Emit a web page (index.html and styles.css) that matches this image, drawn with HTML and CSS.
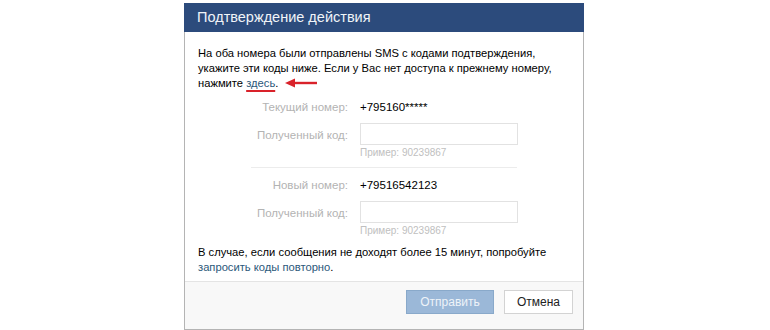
FILE: index.html
```html
<!DOCTYPE html>
<html lang="ru">
<head>
    <meta charset="UTF-8">
    <title>Подтверждение действия</title>
    <link rel="stylesheet" href="styles.css">
</head>
<body>
    <!-- Окно подтверждения -->
    <div class="dialog">
        <div class="dialog-title">Подтверждение действия</div>

        <div class="dialog-body">
            <p class="intro">
                На оба номера были отправлены SMS с кодами подтверждения,
                укажите эти коды ниже. Если у Вас нет доступа к прежнему номеру,
                нажмите <a href="#" class="link marked">здесь</a>.<svg class="arrow" width="33" height="10" viewBox="0 0 33 10"><path d="M33 5H8" stroke="#d9222a" stroke-width="2.4"/><path d="M1 5L11 0.5V9.5Z" fill="#d9222a"/></svg>
            </p>

            <div class="form-row">
                <span class="label">Текущий номер:</span>
                <span class="value">+795160*****</span>
            </div>
            <div class="form-row">
                <span class="label">Полученный код:</span>
                <div>
                    <input type="text" class="code-input">
                    <div class="hint">Пример: 90239867</div>
                </div>
            </div>

            <div class="separator"></div>

            <div class="form-row">
                <span class="label">Новый номер:</span>
                <span class="value">+79516542123</span>
            </div>
            <div class="form-row">
                <span class="label">Полученный код:</span>
                <div>
                    <input type="text" class="code-input">
                    <div class="hint">Пример: 90239867</div>
                </div>
            </div>

            <p class="outro">
                В случае, если сообщения не доходят более 15 минут, попробуйте
                <a href="#" class="link">запросить коды повторно</a>.
            </p>
        </div>

        <div class="dialog-footer">
            <button class="btn btn-primary">Отправить</button>
            <button class="btn">Отмена</button>
        </div>
    </div>
</body>
</html>
```
FILE: styles.css
```css
body {
    margin: 0;
    background: #fff;
    font-family: "Liberation Sans", Arial, sans-serif;
    font-size: 11px;
    color: #000;
}

.dialog {
    width: 400px;
    height: 327px;
    margin: 3px 0 0 184px;
    box-sizing: border-box;
    border: 1px solid #b4b4b4;
    border-top: none;
    display: flex;
    flex-direction: column;
}

.dialog-title {
    height: 29px;
    padding-left: 13px;
    background: #2c4b7c;
    color: #f0f4f8;
    font-size: 14.5px;
    line-height: 29px;
    margin: 0 -1px;
}

.dialog-body {
    flex: 1;
    padding: 14px 13px 0;
}

p {
    margin: 0;
    line-height: 15px;
    font-size: 11.2px;
}

.link {
    color: #2b587a;
    text-decoration: none;
}

.marked {
    text-decoration: underline;
    text-decoration-color: #d9222a;
    text-decoration-thickness: 2px;
    text-underline-offset: 3px;
}

.arrow {
    margin-left: 6px;
    vertical-align: -1px;
}

.form-row {
    display: flex;
    gap: 12px;
    line-height: 16px;
    font-size: 11.5px;
}

.intro + .form-row {
    margin-top: 8px;
}

.form-row + .form-row {
    margin-top: 8px;
}

.label {
    width: 150px;
    text-align: right;
    color: #b3b3b3;
}

.form-row:has(input) .label {
    padding-top: 4px;
}

.code-input {
    display: block;
    width: 158px;
    height: 22px;
    margin: 0;
    box-sizing: border-box;
    border: 1px solid #e2e2e2;
    background: #fff;
}

.hint {
    margin-top: 1px;
    color: #c0c0c0;
    font-size: 10px;
    line-height: 14px;
}

.separator {
    height: 1px;
    margin: 7px 53px 9px 53px;
    background: #ececec;
}

.outro {
    margin-top: 7px;
}

.dialog-footer {
    height: 39px;
    border-top: 1px solid #e4e4e4;
    background: #f8f8f8;
    display: flex;
    justify-content: flex-end;
    align-items: flex-start;
    gap: 10px;
    padding: 8px 10px 0 0;
}

.btn {
    height: 24px;
    width: 69px;
    margin: 0;
    border: 1px solid #d3d3d3;
    background: #fff;
    font-family: "Liberation Sans", Arial, sans-serif;
    font-size: 12px;
    color: #222;
}

.btn-primary {
    width: 88px;
    border-color: #89a9ca;
    background: #9bb8d8;
    color: #eef3f8;
}
```
